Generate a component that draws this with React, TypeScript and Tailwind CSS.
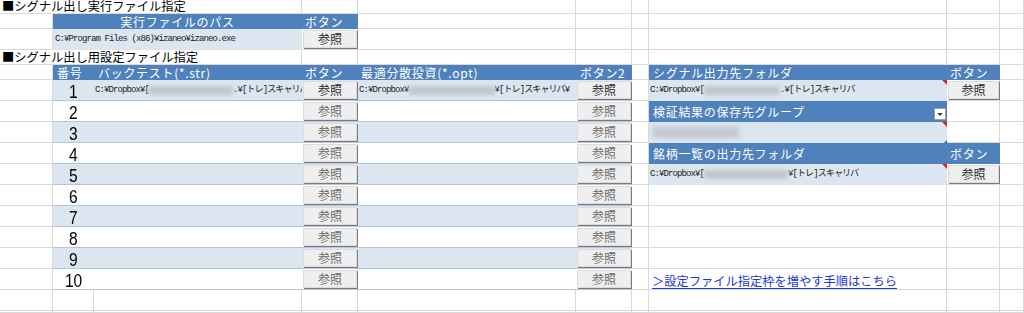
import React from "react";

const TPL =
  "grid grid-cols-[53px_41px_208px_56px_218px_56px_17px_298px_53px_24px] grid-rows-[14px_15px_21px_15px_15px_repeat(11,21px)_2px]";

function Btn({ dark }: { dark?: boolean }) {
  return (
    <div
      className={`mx-[1px] mt-[1px] mb-[2px] flex items-center justify-center bg-[#efefef] border border-[#dcdcdc] shadow-[1px_1px_0_0_#7a7a7a] text-[12px] leading-none ${
        dark ? "text-[#2b2b2b]" : "text-[#6a6a6a]"
      }`}
    >
      参照
    </div>
  );
}

function Path({ pre, blur, post }: { pre: string; blur?: string; post?: string }) {
  return (
    <div className="flex h-full items-center overflow-hidden whitespace-nowrap pl-[1px] font-['Liberation_Mono','Noto_Sans_CJK_JP',monospace] text-[9px] tracking-[-0.9px] text-[#222]">
      <span className="shrink-0">{pre}</span>
      {blur && <span className={`shrink-0 h-[9px] bg-[#c2c6cb] blur-[2px] ${blur}`} />}
      {post && <span className="shrink-0">{post}</span>}
    </div>
  );
}

function RedMark() {
  return (
    <span className="absolute right-0 top-0 h-0 w-0 border-l-[5px] border-t-[5px] border-l-transparent border-t-[#e02020]" />
  );
}

const HEAD = "text-white text-[12px] leading-none tracking-[0.7px] whitespace-nowrap";

export default function App() {
  const rows = [1, 2, 3, 4, 5, 6, 7, 8, 9, 10];
  return (
    <div className="grid h-[313px] w-[1024px] overflow-hidden bg-white font-['Noto_Sans_CJK_JP',sans-serif]">
      {/* gridlines layer */}
      <div className={`col-start-1 row-start-1 ${TPL}`}>
        {Array.from({ length: 170 }).map((_, i) => (
          <div key={i} className="border-b border-r border-[#dadada]" />
        ))}
      </div>

      {/* content layer */}
      <div className={`col-start-1 row-start-1 ${TPL}`}>
        {/* Title 1 */}
        <div className="col-start-1 col-span-3 row-start-1 flex items-center whitespace-nowrap border-b border-r border-[#dadada] bg-white pl-[2px] text-[12.25px] leading-[13px] text-black">
          ■シグナル出し実行ファイル指定
        </div>

        {/* Exec file block */}
        <div className="col-start-2 col-span-3 row-start-2 row-span-2 flex flex-col">
          <div className="grid h-[15px] grid-cols-[249px_56px] bg-[#4f81bd]">
            <div className={`flex items-center justify-center ${HEAD}`}>実行ファイルのパス</div>
            <div className={`flex items-center pl-[3px] ${HEAD}`}>ボタン</div>
          </div>
          <div className="grid h-[21px] grid-cols-[249px_56px]">
            <div className="bg-[#dce6f1] pl-[1px]">
              <Path pre="C:¥Program Files (x86)¥izaneo¥izaneo.exe" />
            </div>
            <Btn dark />
          </div>
        </div>

        {/* Title 2 */}
        <div className="col-start-1 col-span-3 row-start-4 flex items-center whitespace-nowrap border-b border-r border-[#dadada] bg-white pl-[2px] text-[12.25px] leading-[13px] text-black">
          ■シグナル出し用設定ファイル指定
        </div>

        {/* Settings table */}
        <div className="col-start-2 col-span-5 row-start-5 row-span-11 flex flex-col">
          <div className="grid h-[15px] grid-cols-[41px_208px_56px_218px_56px] bg-[#4f81bd]">
            <div className={`flex items-center pl-[4px] ${HEAD}`}>番号</div>
            <div className={`flex items-center pl-[4px] ${HEAD}`}>バックテスト(*.str)</div>
            <div className={`flex items-center pl-[3px] ${HEAD}`}>ボタン</div>
            <div className={`flex items-center pl-[3px] ${HEAD}`}>最適分散投資(*.opt)</div>
            <div className={`flex items-center pl-[4px] ${HEAD}`}>ボタン2</div>
          </div>
          {rows.map((n) => (
            <div
              key={n}
              className={`grid h-[21px] grid-cols-[41px_208px_56px_218px_56px] border-b border-[#b3c7e0] ${
                n % 2 === 1 ? "bg-[#dce6f1]" : "bg-white"
              }`}
            >
              <div className="flex items-center justify-center pt-[2px]">
                <span className="inline-block scale-x-[0.82] font-['Liberation_Sans',sans-serif] text-[19px] leading-none text-black">
                  {n}
                </span>
              </div>
              <div className="overflow-hidden">
                {n === 1 && <Path pre="C:¥Dropbox¥[" blur="w-[84px]" post=".¥[トレ]スキャリバ¥" />}
              </div>
              <Btn dark={n === 1} />
              <div className="overflow-hidden">
                {n === 1 && <Path pre="C:¥Dropbox¥" blur="w-[86px]" post="¥[トレ]スキャリバ¥" />}
              </div>
              <Btn dark={n === 1} />
            </div>
          ))}
        </div>

        {/* Right block */}
        <div className="col-start-8 col-span-2 row-start-5 row-span-6 flex flex-col">
          <div className="grid h-[15px] grid-cols-[298px_53px] bg-[#4f81bd]">
            <div className={`flex items-center pl-[4px] ${HEAD}`}>シグナル出力先フォルダ</div>
            <div className={`flex items-center pl-[3px] ${HEAD}`}>ボタン</div>
          </div>
          <div className="grid h-[21px] grid-cols-[298px_53px]">
            <div className="relative bg-[#dce6f1]">
              <Path pre="C:¥Dropbox¥[" blur="w-[76px]" post=".¥[トレ]スキャリバ" />
              <RedMark />
            </div>
            <Btn dark />
          </div>
          <div className="grid h-[21px] grid-cols-[298px_53px]">
            <div className={`relative flex items-center bg-[#4f81bd] pl-[4px] ${HEAD}`}>
              検証結果の保存先グループ
              <span className="absolute right-[1px] top-[7px] flex h-[12px] w-[12px] items-center justify-center border border-[#a0a0a0] bg-white">
                <span className="h-0 w-0 border-l-[3px] border-r-[3px] border-t-[3px] border-l-transparent border-r-transparent border-t-[#444]" />
              </span>
            </div>
            <div />
          </div>
          <div className="grid h-[21px] grid-cols-[298px_53px]">
            <div className="relative flex items-center bg-[#dce6f1] pl-[4px]">
              <span className="h-[11px] w-[86px] bg-[#c4c8cd] blur-[2px]" />
              <RedMark />
              <span className="absolute bottom-0 right-0 h-0 w-0 border-b-[3px] border-l-[3px] border-b-[#3a5fa0] border-l-transparent" />
            </div>
            <div />
          </div>
          <div className="grid h-[21px] grid-cols-[298px_53px] bg-[#4f81bd]">
            <div className={`flex items-center pl-[4px] ${HEAD}`}>銘柄一覧の出力先フォルダ</div>
            <div className={`flex items-center pl-[3px] ${HEAD}`}>ボタン</div>
          </div>
          <div className="grid h-[21px] grid-cols-[298px_53px]">
            <div className="relative bg-[#dce6f1]">
              <Path pre="C:¥Dropbox¥[" blur="w-[84px]" post="¥[トレ]スキャリバ" />
              <RedMark />
            </div>
            <Btn dark />
          </div>
        </div>

        {/* Link */}
        <div className="col-start-8 row-start-15 flex items-center whitespace-nowrap pl-[3px] pt-[3px]">
          <a className="text-[12.25px] leading-none text-[#2438d4] underline underline-offset-2">
            ＞設定ファイル指定枠を増やす手順はこちら
          </a>
        </div>
      </div>
    </div>
  );
}
